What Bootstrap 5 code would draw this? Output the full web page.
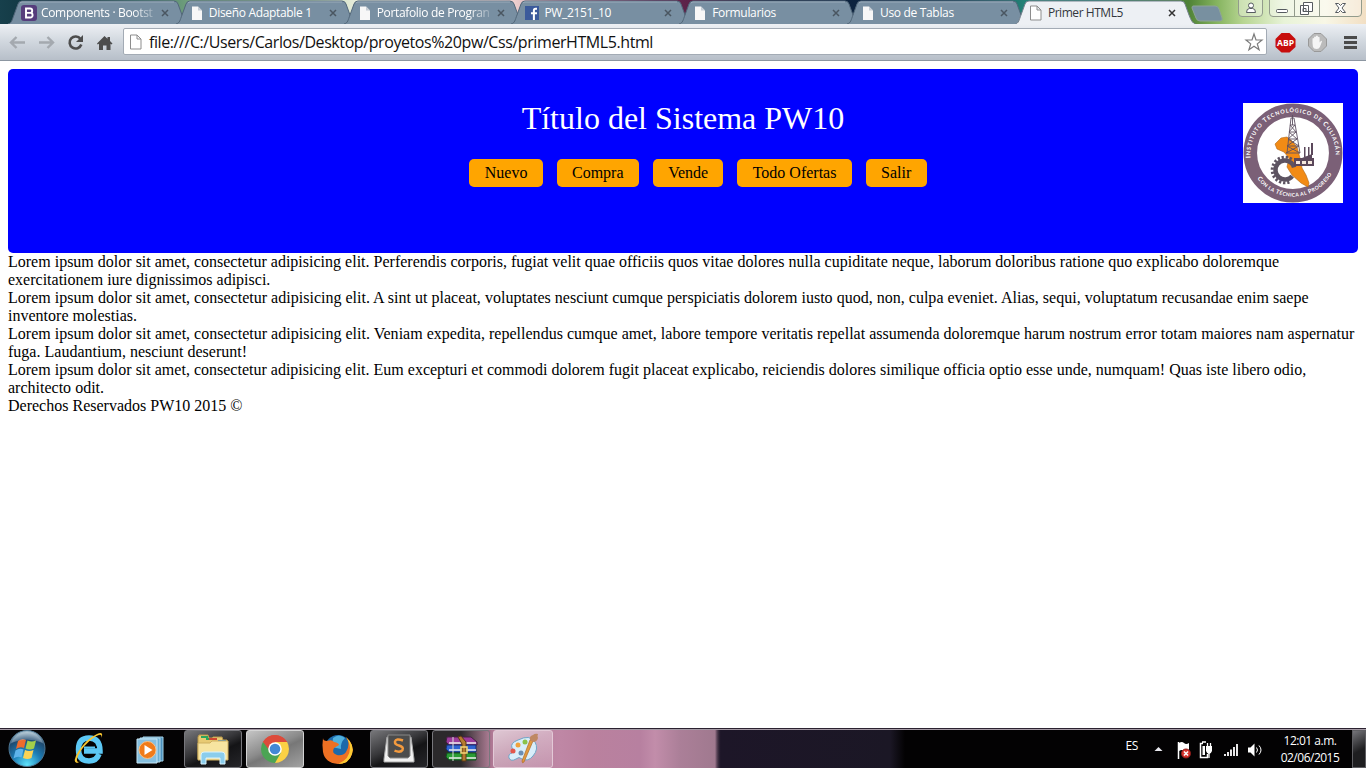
<!DOCTYPE html>
<html lang="es">
<head>
<meta charset="utf-8">
<title>Primer HTML5</title>
<link href="https://cdn.jsdelivr.net/npm/bootstrap@5.3.0/dist/css/bootstrap.min.css" rel="stylesheet">
<style>
body{width:1366px;height:768px;overflow:hidden;background:#fff;color:#000;font-family:"Liberation Serif",serif;font-size:16px;line-height:18px}
svg{display:block;flex:none}
.ui{font-family:"Open Sans","Noto Sans",sans-serif}
.frame{height:24px;padding-left:8px;background:linear-gradient(90deg,#17404c 0,#0c2c35 5%,#3d7568 10%,#73a17d 14%,#a9c9a0 22%,#e6ecda 26%,#f1ece6 31%,#f8ddd9 37%,#b98a9c 41%,#682b54 48%,#581f45 51%,#101e38 56%,#0b2440 64%,#123e54 70%,#238276 75%,#218074 80%,#4f8236 87%,#83b25d 89%,#b7d592 91%,#e8f3d8 94%,#f8f7e6 97%,#f2dfc4 100%)}
.tab{width:182px;height:24px;margin-right:-14.2px;position:relative;flex:none}
.tab-bg{position:absolute;inset:0}
.tab-in{position:relative;height:24px;padding:1px 0 0 13px}
.tab-text{font-size:12px;line-height:22px;width:116px;margin-left:4px;color:#fff;white-space:nowrap;letter-spacing:-.33px}
.fade-end{-webkit-mask-image:linear-gradient(90deg,#000 92px,#0003 114px)}
.tab-on .tab-text{color:#33373d;letter-spacing:-.45px}
.toolbar{height:37px;background:linear-gradient(#edf0f4,#d3d9e0 45%,#b7bfc9);border-bottom:1px solid #8c96a1}
.omni{width:1144px;height:27px;margin-top:-1px;border:1px solid #a3abb5;border-radius:2px;background:#fff}
.url{font-size:16px;line-height:24px;margin-left:5px;white-space:nowrap;color:#111;letter-spacing:-.4157px}
.page{height:667px;padding:8px}
.masthead{height:184px;background:#00f;border-radius:5px;padding-top:31px}
.masthead h1{font-size:32px;line-height:37px;font-weight:400;color:#fff}
.menu{gap:14px;margin-top:22px;padding-left:30px}
.menu a{height:28px;line-height:28px;padding:0 15.300px;border-radius:5px;background:orange;color:#000;text-decoration:none;text-align:center;white-space:nowrap}
.crest{position:absolute;right:15px;top:34px}
.ln{white-space:nowrap;letter-spacing:.005px}
.ln-wide{letter-spacing:.013px}
.taskbar{height:40px;padding-top:1px;background:linear-gradient(90deg,transparent 0 715px,#1d1628 721px,#1b1725 890px,#030203 905px),linear-gradient(90deg,#040304 0 460px,#4c3443 475px,#b07995 492px,#bf87a5 560px,#ba819e 590px,#b780a0 640px,#c28daa 655px,#ab7f98 680px,#a0798f 715px,#1d1628 722px);border-top:1px solid #2b2230;box-shadow:inset 0 1px #a59aa5}
.launch{width:61px;height:38px}
.app{height:38px;width:58px;margin-right:4px;border:1px solid #77777c;border-radius:3px;background:linear-gradient(155deg,#77777a,#37373a 42%,#141416 60%,#26262a)}
.app-front{background:linear-gradient(155deg,#c5c5c5,#8b8b8b 45%,#777 55%,#a2a2a2);border-color:#d4d4d4}
.app-glass{background:linear-gradient(155deg,#ffffff95,#ffffff55 45%,#ffffff20);border-color:#e3c9d7;width:60px}
.app-mix{background:linear-gradient(90deg,#2b292b 50%,#a97a91)}
.lang{font-size:12px;color:#fff;letter-spacing:-.4px;padding-bottom:6px}
.clock{width:68px;font-size:12px;line-height:17px;color:#fff;text-align:center;letter-spacing:-.5px;white-space:nowrap}
.peek{width:14px;height:38px;border:1px solid #5e5e62;background:linear-gradient(150deg,#75757a,#1e1e20 55%)}
</style>
</head>
<body>
<svg width="0" height="0" class="position-absolute"><defs>
<symbol id="page" viewBox="0 0 16 16"><path d="M3 1.500h6l4 4v9.500H3z" fill="#f7f7f7"/><path d="M9 1.500v4h4" fill="#c6cdd5"/></symbol>
<symbol id="pageline" viewBox="0 0 16 16"><path d="M2.500 1h6.500l4 4v10H2.500zM9 1v4h4" fill="#fff" stroke="#8d8d8d"/></symbol>
<symbol id="x" viewBox="0 0 8 8"><path d="M1 1l6 6M7 1l-6 6" stroke-width="1.500"/></symbol>
<symbol id="tabshape" viewBox="0 0 182 24"><path d="M0 24C4 23 4 20 6 15L10 4Q11 1 14 1H166Q169 1 170 4L174 15C176 20 177 23 181 24" fill="#788fa2" stroke="#52677a"/><path d="M12 3Q13 2 14 2H166" stroke="#9aacba" fill="none"/></symbol>
</defs></svg>

<div class="frame ui d-flex position-relative">
  <div class="tab"><svg class="tab-bg" width="182" height="24"><use href="#tabshape"/></svg><div class="tab-in d-flex align-items-center"><svg width="16" height="16"><rect width="16" height="16" rx="3" fill="#563d7c"/><path d="M5 3.500h4a2.200 2.200 0 0 1 0 4.400H5zM5 7.900h4.300a2.300 2.300 0 0 1 0 4.600H5z" fill="none" stroke="#fff" stroke-width="1.900"/></svg><div class="tab-text fade-end">Components · Bootst</div><svg class="ms-1" width="8" height="8" stroke="#4a5661"><use href="#x"/></svg></div></div>
  <div class="tab"><svg class="tab-bg" width="182" height="24"><use href="#tabshape"/></svg><div class="tab-in d-flex align-items-center"><svg width="16" height="16"><use href="#page"/></svg><div class="tab-text">Diseño Adaptable 1</div><svg class="ms-1" width="8" height="8" stroke="#4a5661"><use href="#x"/></svg></div></div>
  <div class="tab"><svg class="tab-bg" width="182" height="24"><use href="#tabshape"/></svg><div class="tab-in d-flex align-items-center"><svg width="16" height="16"><use href="#page"/></svg><div class="tab-text fade-end">Portafolio de Progran</div><svg class="ms-1" width="8" height="8" stroke="#4a5661"><use href="#x"/></svg></div></div>
  <div class="tab"><svg class="tab-bg" width="182" height="24"><use href="#tabshape"/></svg><div class="tab-in d-flex align-items-center"><svg width="16" height="16"><path d="M1 1h14v14H1z" fill="#3b5a9b"/><path d="M13 3.800h-1.500q-1.600 0-1.600 1.700V15M7 8.300h6" fill="none" stroke="#fff" stroke-width="2"/></svg><div class="tab-text">PW_2151_10</div><svg class="ms-1" width="8" height="8" stroke="#4a5661"><use href="#x"/></svg></div></div>
  <div class="tab"><svg class="tab-bg" width="182" height="24"><use href="#tabshape"/></svg><div class="tab-in d-flex align-items-center"><svg width="16" height="16"><use href="#page"/></svg><div class="tab-text">Formularios</div><svg class="ms-1" width="8" height="8" stroke="#4a5661"><use href="#x"/></svg></div></div>
  <div class="tab"><svg class="tab-bg" width="182" height="24"><use href="#tabshape"/></svg><div class="tab-in d-flex align-items-center"><svg width="16" height="16"><use href="#page"/></svg><div class="tab-text">Uso de Tablas</div><svg class="ms-1" width="8" height="8" stroke="#4a5661"><use href="#x"/></svg></div></div>
  <div class="tab tab-on"><svg class="tab-bg" width="182" height="24"><path d="M0 24.500C4 23 4 20 6 15L10 4Q11 1 14 1H166Q169 1 170 4L174 15C176 20 177 23 181 24.500" fill="#edf0f4" stroke="#75818d"/><path d="M2 24h177" stroke="#edf0f4"/></svg><div class="tab-in d-flex align-items-center"><svg width="16" height="16"><use href="#pageline"/></svg><div class="tab-text">Primer HTML5</div><svg class="ms-1" width="8" height="8" stroke="#333"><use href="#x"/></svg></div></div>
  <svg class="ms-auto position-relative" width="180" height="24" viewBox="1186 0 180 24" fill="none"><path d="M1193 6h22q3 0 4 3l3 9q1 3-2 3h-20q-3 0-4-3l-4-10q0-2 1-2z" fill="#7890a0" stroke="#8ea498"/><path d="M1238.500 0v13q0 3.500 3.500 3.500h17q3.500 0 3.500-3.500V0M1269.500 0v13q0 3.500 3.500 3.500h85q3.500 0 3.500-3.500V0M1294.500 0v16M1319.500 0v16" fill="#ffffff55" stroke="#929b8c"/><g stroke="#565b60" fill="#fff"><circle cx="1251" cy="5.500" r="2.500"/><path d="M1246.500 12.500q0-4 3-4h3q3 0 3 4z"/><rect x="1276.500" y="9.500" width="11" height="3" rx="1"/><path d="M1303.500 2.500h9v9h-9zM1300.500 5.500h8v9h-8zM1303 8.500h3v3h-3z"/><path d="M1335.500 3.500h3l2 2 2-2h3l-3.500 4.500 3.500 4.500h-3l-2-2-2 2h-3l3.500-4.500z"/></g></svg>
</div>

<div class="toolbar ui d-flex align-items-center">
  <svg width="123" height="36" viewBox="0 24 123 36" fill="none"><path d="M25 42.500H11M16.500 37l-5.500 5.500 5.500 5.500M39 42.500h14M47.500 37l5.500 5.500-5.500 5.500" stroke="#a4a9af" stroke-width="2.400"/><path d="M80.500 39A6 6 0 1 0 81.300 44.500" stroke="#4d4d4d" stroke-width="2.600"/><path d="M83 35v7h-7z" fill="#4d4d4d"/><path d="M97 43.500l7.500-7.500 3 2.800V37h2.500v4l2.500 2.500-1 1-1-.8V50h-4v-4.500H103V50h-4v-6.300l-1.300.8z" fill="#4d4d4d"/></svg>
  <div class="omni d-flex align-items-center"><svg class="ms-1" width="16" height="16"><use href="#pageline"/></svg><div class="url flex-grow-1">file:///C:/Users/Carlos/Desktop/proyetos%20pw/Css/primerHTML5.html</div><svg width="20" height="20" viewBox="-.5 -.5 20 20" style="margin-right:2px" fill="#fff" stroke="#7a7a7a" stroke-width="1.200"><path d="M9.500 1.500l2 6h6l-4.700 3.900 1.800 5.800-5.100-3.500-5.100 3.500 1.800-5.800-4.700-3.900h6z"/></svg></div>
  <svg width="99" height="36" viewBox="1267 24 99 36"><path d="M1281.500 33h8l6 6v8l-6 5.500h-8l-6-5.500v-8z" fill="#c70d0d"/><text x="1285.500" y="46.300" text-anchor="middle" font-size="9" font-weight="700" fill="#fff" textLength="17" lengthAdjust="spacingAndGlyphs">ABP</text><path d="M1314 33.500h7l5.500 5.500v7l-5.500 5.500h-7l-5.500-5.500v-7z" fill="#bbb" stroke="#999"/><path d="M1312.500 43v-4.500q1-1 1.600 0V37q1-1.200 1.800 0v-.8q1-1.200 2 0v1q1-1 1.700.2v5l1.300-1.500q1.300-.4 1 .8l-2 5.300q-1 2-3 2-3.400 0-4-2.500z" fill="#f5f5f5"/><path d="M1344 37.500h13M1344 42.500h13M1344 47.500h13" stroke="#4b4b4b" stroke-width="3"/></svg>
</div>

<main class="page">
  <header class="masthead position-relative">
    <h1 class="text-center m-0">Título del Sistema PW10</h1>
    <nav class="menu d-flex justify-content-center">
      <a href="#">Nuevo</a><a href="#">Compra</a><a href="#">Vende</a><a href="#">Todo Ofertas</a><a href="#">Salir</a>
    </nav>
    <svg class="crest" width="100" height="100" viewBox="0 0 100 100"><path fill="#fff" d="M0 0h100v100H0z"/><circle cx="50" cy="50" r="42.700" fill="none" stroke="#7b6077" stroke-width="13.500"/>
      <defs><path id="arcTop" d="M8.500 60A42.700 42.700 0 1 1 91.500 60"/><path id="arcLow" d="M8.500 65A44.400 44.400 0 0 0 91.500 65"/></defs>
      <g fill="#fff" font-family="Lato,sans-serif" font-weight="700"><text font-size="6.500" transform="translate(0 2)"><textPath href="#arcTop" startOffset="7" textLength="137">I<tspan font-size="5.500">NSTITUTO</tspan> T<tspan font-size="5.500">ECNOLÓGICO DE</tspan> C<tspan font-size="5.500">ULIACÁN</tspan></textPath></text><text font-size="6"><textPath href="#arcLow" startOffset="12" textLength="88">C<tspan font-size="5">ON LA</tspan> T<tspan font-size="5">ÉCNICA AL</tspan> P<tspan font-size="5">ROGRESO</tspan></textPath></text></g>
      <path d="M32 41l6-6 6-1 5 4 5 6 3 11 2 10 4 7 3 8-1 4-7-4-9-8-5-8 2-9-5-6-7-3z" fill="#f28b15" stroke="#ad6416" stroke-width=".6"/>
      <circle cx="42" cy="67" r="9.500" fill="none" stroke="#5d5361" stroke-width="4.500" stroke-dasharray="50 10" transform="rotate(40 42 67)"/><circle cx="42" cy="67" r="12.800" fill="none" stroke="#5d5361" stroke-width="3" stroke-dasharray="2.300 1.800 2.300 1.800 2.300 1.800 2.300 1.800 2.300 1.800 2.300 1.800 2.300 1.800 2.300 1.800 2.300 1.800 2.300 1.800 2.300 1.800 2.300 1.800 2.300 30" transform="rotate(70 42 67)"/>
      <path d="M48 15l-4 35M51 15l6 35M48 15h3M47 22h5M46 29h7M45 36h9M44 43h12M43 50h14M47 22l6 7-8 7 11 7-13 7M52 22l-6 7 8 7-10 7 13 7M49.500 12v10" fill="none" stroke="#5d5061" stroke-width=".9"/>
      <path d="M51 55h8l10-4v4h2v8H51zM61 44h1.500v10H61zM65 44h1.500v9H65zM68 40h2v12h-2z" fill="#5b485b"/><path d="M53 58h4v3h-4zM59 58h4v3h-4zM65 58h4v3h-4z" fill="#f4e9df"/></svg>
  </header>
  <section>
    <div class="ln">Lorem ipsum dolor sit amet, consectetur adipisicing elit. Perferendis corporis, fugiat velit quae officiis quos vitae dolores nulla cupiditate neque, laborum doloribus ratione quo explicabo doloremque<br>exercitationem iure dignissimos adipisci.</div>
    <div class="ln ln-wide">Lorem ipsum dolor sit amet, consectetur adipisicing elit. A sint ut placeat, voluptates nesciunt cumque perspiciatis dolorem iusto quod, non, culpa eveniet. Alias, sequi, voluptatum recusandae enim saepe<br>inventore molestias.</div>
    <div class="ln ln-wide">Lorem ipsum dolor sit amet, consectetur adipisicing elit. Veniam expedita, repellendus cumque amet, labore tempore veritatis repellat assumenda doloremque harum nostrum error totam maiores nam aspernatur<br>fuga. Laudantium, nesciunt deserunt!</div>
    <div class="ln">Lorem ipsum dolor sit amet, consectetur adipisicing elit. Eum excepturi et commodi dolorem fugit placeat explicabo, reiciendis dolores similique officia optio esse unde, numquam! Quas iste libero odio,<br>architecto odit.</div>
  </section>
  <footer class="ln">Derechos Reservados PW10 2015 ©</footer>
</main>

<div class="taskbar ui d-flex align-items-center">
  <svg width="58" height="38" viewBox="0 0 58 38"><defs><radialGradient id="orb" cx=".5" cy=".95" r=".9"><stop offset="0" stop-color="#5fe3fb"/><stop offset=".45" stop-color="#1c7db6"/><stop offset=".8" stop-color="#1e4a70"/><stop offset="1" stop-color="#9db9c9"/></radialGradient></defs><circle cx="27" cy="18.500" r="18" fill="url(#orb)" stroke="#4d7591"/><path d="M18 11q4-3 8-1l-2 8q-4-2-8 1z" fill="#ee6b2c"/><path d="M27.500 10.500q4 2 8.500 0l-2 8q-4 2-8.500 0z" fill="#a3cf4a"/><path d="M15.500 20.500q4-3 8-1l-2 8q-4-2-8 1z" fill="#5fb4ea"/><path d="M25 20q4 2 8.500 0l-2 8q-4 2-8.500 0z" fill="#fcd354"/><path d="M11 13q4-10 16-11 12 1 16 11-16-7-32 0z" fill="#fff" opacity=".25"/></svg>
  <svg class="launch" viewBox="58 0 61 38"><path d="M99 24q-2.500 7-10 7-10.500 0-10.500-11.500T89 8q11 0 11 13H84" fill="none" stroke="#5cc8f5" stroke-width="5.500"/><path d="M84 17.500h11" stroke="#5cc8f5" stroke-width="2"/><path d="M77 33q-5-1 1-11Q86 9 97 4q7-3 4.500 4 1-8-12 3-10 9-12.500 18-.5 4 3.500 2.500" fill="#f7c531"/></svg>
  <svg style="width:65px" height="38" viewBox="119 0 65 38"><path d="M143 7h20v24h-20z" fill="#4d91bd" stroke="#a5d3e8"/><path d="M140 8h20v24h-20z" fill="#6aaed3" stroke="#b7dcec"/><path d="M137 9h20v24h-20z" fill="#86bfdf" stroke="#c7e6f4"/><circle cx="147.500" cy="20" r="8.500" fill="#f07b19" stroke="#f9bf83"/><path d="M144.500 15v10l8-5z" fill="#fff"/></svg>
  <div class="app d-flex align-items-center justify-content-center"><svg width="34" height="32" viewBox="0 0 34 32"><path d="M2 4l1-2h9l1 3h3l1-1h9l1 3h4v19H2z" fill="#e8ca73" stroke="#b7984a"/><path d="M5 4h7M10 6h8" stroke="#2ca55b" stroke-width="2"/><path d="M13 6h8" stroke="#ce4930" stroke-width="2"/><path d="M22 8h8" stroke="#4289ca" stroke-width="2"/><path d="M2 10h12l2-2h16v19H2z" fill="#f7e4a0" stroke="#cfb060"/><path d="M5 31V22q0-3 3-3h18q3 0 3 3v9h-5v-6H10v6z" fill="#8bcdec" stroke="#d9f3fd"/></svg></div>
  <div class="app app-front d-flex align-items-center justify-content-center"><svg width="30" height="30" viewBox="0 0 30 30"><path d="M15 15L2.900 8A14 14 0 0 1 27.100 8z" fill="#dd4b3b"/><path d="M15 15V29A14 14 0 0 0 27.100 8H15z" fill="#fbd145"/><path d="M15 15l-12.100-7A14 14 0 0 0 15 29l6-10.500z" fill="#4ca454"/><path d="M3.500 8.500L12 20l3-12H27q-3-6-12-7Q7 1 3 8z" fill="#dd4b3b"/><circle cx="15" cy="15" r="6.800" fill="#fff"/><circle cx="15" cy="15" r="5.300" fill="#4388d6"/></svg></div>
  <svg width="62" height="38" viewBox="308 0 62 38"><circle cx="338" cy="18" r="13" fill="#1c69aa"/><path d="M333 8q6-5 12 0-5 5-4 11l-9-2z" fill="#4fb0dd"/><path d="M323 8q0 3 4 3 5-2 7 1 5 1 5 3l-5 3q-3 5 3 7 6 1 9-3 5-8 0-15 9 8 6 17-3 10-14 10-13-1-15-12-1-8 0-14z" fill="#ed7023"/><path d="M346 7q9 8 6 17-3 10-14 10 12-5 12-16 0-5-4-11z" fill="#fbcb34"/></svg>
  <div class="app d-flex align-items-center justify-content-center"><svg width="32" height="30" viewBox="0 0 32 30"><path d="M4 3h24l3 22v3H1v-3z" fill="#f1f1f1" stroke="#aaa"/><path d="M5 1h22v21l-2 2H7l-2-2z" fill="#4c4c4c" stroke="#888"/><path d="M20 6.500q-7-2.500-8 1-.5 3 4 4 5 1.500 3.500 4.500-2 3-8 .7" fill="none" stroke="#f39a3e" stroke-width="2.500"/></svg></div>
  <div class="app app-mix d-flex align-items-center justify-content-center" style="margin-right:3px"><svg width="34" height="28" viewBox="0 0 34 28"><path d="M3 2h24l6 5v3H5L2 7z" fill="#9c3b9b" stroke="#442044"/><path d="M3 10h29v7H5l-3-3z" fill="#2f63d3" stroke="#183171"/><path d="M3 18h29v7H5l-3-3z" fill="#2a9c34" stroke="#134e20"/><path d="M5 8h27M5 15h27M5 23h27" stroke="#eee" stroke-width="1.500"/><path d="M9 2v24" stroke="#ddd"/><path d="M17 1l5 6v19h-4V9l-4-7z" fill="#b67b2f" stroke="#5a3a13"/><path d="M17 12h6v6h-6z" fill="none" stroke="#f5d778" stroke-width="1.500"/></svg></div>
  <div class="app app-glass d-flex align-items-center justify-content-center"><svg width="34" height="32" viewBox="0 0 34 32"><path d="M12 7q12-6 17 2 4 7-2 14-5 6-11 3-3-3-6 0-5 3-7-1-1-4 3-5 3-2 0-5-2-5 6-8z" fill="#d9eefa" stroke="#6fa6c7"/><circle cx="7" cy="18" r="2.500" fill="#e2574c"/><circle cx="12" cy="12" r="2.500" fill="#f0a23c"/><circle cx="19" cy="9" r="2.500" fill="#8bc34a"/><circle cx="15" cy="20" r="2.500" fill="#6b8fb5"/><path d="M27 8L18 29q-2 2-2-1l8-21z" fill="#e29a3f" stroke="#ae6b28" stroke-width=".7"/><path d="M24 7q-1-4 3-5 2-2 5-1-1 2 0 4-1 4-5 4z" fill="#bf8863"/></svg></div>
  <div class="lang ms-auto">ES</div>
  <svg class="ms-3" width="110" height="38" viewBox="1155 0 110 38"><path d="M1155.500 21l4-4 4 4z" fill="#e9e9ef"/><path d="M1179.500 12v17" stroke="#fff" stroke-width="1.500"/><path d="M1180 13q3-2 5 0t5 0v8q-3 2-5 0t-5 0z" fill="#fff"/><circle cx="1187" cy="23.500" r="4.500" fill="#d9342d" stroke="#8c1b19"/><path d="M1185 21.500l4 4m0-4l-4 4" stroke="#fff" stroke-width="1.500"/><path d="M1204 13.500h-2.500v14h7V24M1203 12h4" stroke="#fff" fill="none" stroke-width="1.500"/><path d="M1203.500 16h2.500v9h-2.500zM1207 16h6v5q-1 3-3 3t-3-3z" fill="#fff"/><path d="M1208.500 13v3M1211.500 13v3M1210 23v5" stroke="#fff" stroke-width="1.300"/><path d="M1226 24v2M1229 22v4M1232 19.500v6.500M1235 17v9M1238 14v12" stroke="#fff" stroke-width="1.800"/><path d="M1249 17.500h2.500l4-4v13l-4-4H1249z" fill="#fff"/><path d="M1257.500 17.500q2 2.500 0 5M1260 15.500q4 4.500 0 9" fill="none" stroke="#fff"/></svg>
  <div class="clock" style="margin:0 8px 0 12px">12:01 a.m.<br>02/06/2015</div>
  <div class="peek"></div>
</div>
<script src="https://cdn.jsdelivr.net/npm/bootstrap@5.3.0/dist/js/bootstrap.bundle.min.js"></script>
</body>
</html>
